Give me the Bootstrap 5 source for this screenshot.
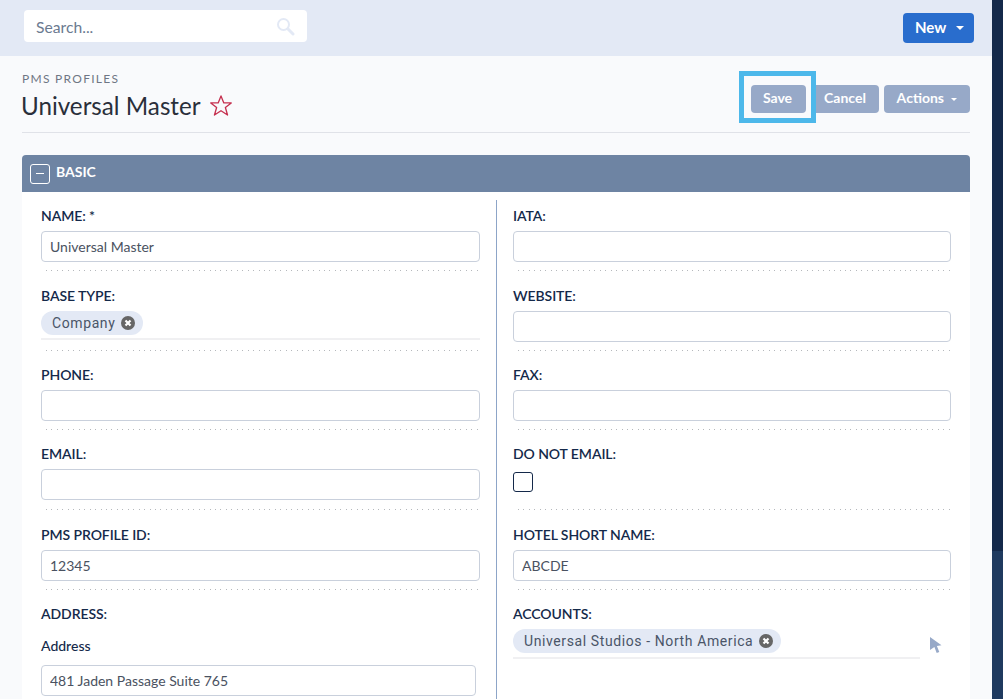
<!DOCTYPE html>
<html lang="en">
<head>
  <meta charset="UTF-8">
  <meta name="viewport" content="width=device-width, initial-scale=1.0">
  <title>PMS Profiles</title>
  <link href="https://cdn.jsdelivr.net/npm/bootstrap@5.3.1/dist/css/bootstrap.min.css" rel="stylesheet">
  <style>
    html, body { height: 100%; overflow: hidden; }
    body { font-family: Lato, "Liberation Sans", sans-serif; background: #f9fafc; color: #14294a; }
    .app-shell { height: 699px; overflow: hidden; }
    .main-area { width: 992px; }
    .side-strip { width: 11px; background: linear-gradient(#14294a 0, #14294a 551px, #1f3a5f 551px); }
    .top-bar { height: 56px; background: #e3e9f5; padding: 10px 18px 0 24px; }
    .search-box { width: 283px; height: 32px; background: #fff; border-radius: 4px; padding: 0 12px; }
    .search-box span { font-size: 15.7px; color: #6b7a90; padding-top: 3px; }
    .btn-new { width: 71px; height: 30px; margin-top: 3px; background: #296dcd; color: #fff; border: 0; border-radius: 4px; font-size: 15px; font-weight: 700; padding: 0 0 1px 12px; text-align: left; }
    .caret-down { display: inline-block; border-style: solid; border-color: currentColor transparent transparent; border-width: 4px 4px 0; vertical-align: 3px; }
    .new-caret { margin-left: 6px; }
    .page-wrap { padding: 0 22px; }
    .page-head { height: 77px; border-bottom: 1px solid #e0e2e8; padding-top: 16px; }
    .eyebrow { font-size: 12px; letter-spacing: 1.28px; color: #6f7684; line-height: 14px; font-weight: 400; }
    .page-title { font-size: 24.2px; line-height: 30px; font-weight: 400; color: #2a2f3a; margin: 5px 0 0 -1px; }
    .page-actions { gap: 5px; padding-top: 13px; position: relative; }
    .btn-soft { height: 28px; background: #97a9c8; color: #fff; border: 0; border-radius: 4px; font-size: 14px; font-weight: 700; padding: 0 0 3px; }
    .btn-save { width: 55px; padding-right: 2px; }
    .btn-cancel { width: 68px; }
    .btn-actions { width: 86px; }
    .actions-caret { border-width: 3px 3px 0; vertical-align: 2px; }
    .save-ring { position: absolute; left: -12px; top: -1px; width: 77px; height: 52px; border: 5px solid #4db8ea; }
    .panel-head { height: 37px; margin-top: 22px; background: #6e84a3; border-radius: 4px 4px 0 0; padding: 0 0 5px 8px; color: #fff; font-weight: 700; font-size: 14px; }
    .collapse-box { width: 20px; height: 20px; border: 1px solid #fff; border-radius: 3px; margin: 5px 6px 0 0; }
    .collapse-box::after { content: ""; width: 8px; height: 1.5px; background: #fff; }
    .panel-body { background: #fff; padding: 8px 0 0 19px; height: 520px; }
    .col-left { width: 456px; padding-right: 16px; border-right: 1px solid #8da5c8; height: 500px; flex: none; }
    .col-right { width: 438px; margin-left: 16px; flex: none; }
    .field { height: 79px; position: relative; padding-top: 6px; }
    .field-wide { height: 80px; }
    .field-tall { height: 81px; }
    .field-label { display: block; font-size: 14px; font-weight: 600; letter-spacing: -.08px; line-height: 20px; margin: 0 0 5px; color: #14294a; }
    .address-block { padding-top: 6px; }
    .sub-label { letter-spacing: 0; line-height: 20px; margin: 12px 0 9px; font-weight: 500; }
    .text-in { height: 31px; border: 1px solid #c9d0dc; border-radius: 4px; background: #fff; padding: 0 8px; font-family: Lato, sans-serif; font-size: 14px; color: #4a5261; box-shadow: none; }
    .address-in { width: 435px; }
    .dots { position: absolute; left: 5px; right: 0; top: 70px; height: 1px; background-image: repeating-linear-gradient(90deg, #b5b8bc 0 1px, transparent 1px 5.45px); }
    .field-tall .dots { top: 71px; }
    .pill { width: fit-content; height: 24px; border-radius: 12px; background: #e3e9f5; padding: 0 8px 0 11px; font-family: Roboto, sans-serif; font-size: 14px; letter-spacing: .6px; color: #4a5568; }
    .pill-x { width: 14px; height: 14px; margin-left: 6px; }
    .under-line { height: 2px; background: #f0f0f2; margin-top: 3px; }
    .check-box { display: block; width: 20px; height: 20px; border: 1px solid #14294a; border-radius: 3px; margin-top: 8px; }
    .accounts-line { width: 407px; margin-top: 4px; }
    .pointer-icon { position: absolute; left: 417px; top: 39px; }
  </style>
</head>
<body>
  <div class="app-shell d-flex">
    <div class="main-area">
      <!-- top bar -->
      <div class="top-bar d-flex justify-content-between align-items-start">
        <div class="search-box d-flex align-items-center justify-content-between">
          <span>Search...</span>
          <svg width="19" height="19" viewBox="0 0 19 19" fill="none"><circle cx="7.5" cy="7.5" r="5.5" stroke="#e3e9f5" stroke-width="2"/><path d="M12 12l5 5" stroke="#e3e9f5" stroke-width="3" stroke-linecap="round"/></svg>
        </div>
        <button class="btn-new" type="button">New <span class="caret-down new-caret"></span></button>
      </div>

      <div class="page-wrap">
        <!-- title row -->
        <div class="page-head d-flex justify-content-between">
          <div>
            <div class="eyebrow">PMS PROFILES</div>
            <h1 class="page-title d-flex align-items-center">Universal Master
              <svg class="ms-2" width="24" height="24" viewBox="0 0 22 22" fill="none"><path d="M11 1.8l2.6 6.4h6.8l-5.4 4.2 2 6.9-6-4-6 4 2-6.9-5.4-4.2h6.8z" stroke="#c5304f" stroke-width="1.2" stroke-linejoin="round"/></svg>
            </h1>
          </div>
          <div class="page-actions d-flex align-items-start">
            <button class="btn-soft btn-save" type="button">Save</button>
            <button class="btn-soft btn-cancel" type="button">Cancel</button>
            <button class="btn-soft btn-actions" type="button">Actions <span class="caret-down actions-caret ms-1"></span></button>
            <div class="save-ring"></div>
          </div>
        </div>

        <!-- basic panel -->
        <div class="panel-head d-flex align-items-center">
          <span class="collapse-box d-flex align-items-center justify-content-center"></span>BASIC
        </div>
        <div class="panel-body d-flex">
          <div class="col-left">
            <div class="field field-wide"><label class="field-label">NAME: *</label><input class="form-control text-in" value="Universal Master"><div class="dots"></div></div>
            <div class="field"><label class="field-label">BASE TYPE:</label>
              <div class="pill d-flex align-items-center">Company
                <svg class="pill-x" viewBox="0 0 14 14"><circle cx="7" cy="7" r="7" fill="#666"/><path d="M4.5 4.5l5 5M9.5 4.5l-5 5" stroke="#fff" stroke-width="2.2"/></svg>
              </div>
              <div class="under-line"></div><div class="dots"></div></div>
            <div class="field"><label class="field-label">PHONE:</label><input class="form-control text-in"><div class="dots"></div></div>
            <div class="field field-tall"><label class="field-label">EMAIL:</label><input class="form-control text-in"><div class="dots"></div></div>
            <div class="field"><label class="field-label">PMS PROFILE ID:</label><input class="form-control text-in" value="12345"><div class="dots"></div></div>
            <div class="address-block"><label class="field-label">ADDRESS:</label>
              <label class="field-label sub-label">Address</label>
              <input class="form-control text-in address-in" value="481 Jaden Passage Suite 765"></div>
          </div>
          <div class="col-right">
            <div class="field field-wide"><label class="field-label">IATA:</label><input class="form-control text-in"><div class="dots"></div></div>
            <div class="field"><label class="field-label">WEBSITE:</label><input class="form-control text-in"><div class="dots"></div></div>
            <div class="field"><label class="field-label">FAX:</label><input class="form-control text-in"><div class="dots"></div></div>
            <div class="field field-tall"><label class="field-label">DO NOT EMAIL:</label><span class="check-box"></span><div class="dots"></div></div>
            <div class="field"><label class="field-label">HOTEL SHORT NAME:</label><input class="form-control text-in" value="ABCDE"><div class="dots"></div></div>
            <div class="field"><label class="field-label">ACCOUNTS:</label>
              <div class="pill d-flex align-items-center">Universal Studios - North America
                <svg class="pill-x" viewBox="0 0 14 14"><circle cx="7" cy="7" r="7" fill="#666"/><path d="M4.5 4.5l5 5M9.5 4.5l-5 5" stroke="#fff" stroke-width="2.2"/></svg>
              </div>
              <div class="under-line accounts-line"></div>
              <svg class="pointer-icon" width="12" height="16" viewBox="0 0 12 16"><path d="M0 0l11.5 8.3-4.6.6 2.4 6-2.6 1-2.3-6L0 13z" fill="#97a9c8"/></svg>
            </div>
          </div>
        </div>
      </div>
    </div>
    <div class="side-strip flex-grow-1"></div>
  </div>
  <script src="https://cdn.jsdelivr.net/npm/bootstrap@5.3.1/dist/js/bootstrap.bundle.min.js"></script>
</body>
</html>
